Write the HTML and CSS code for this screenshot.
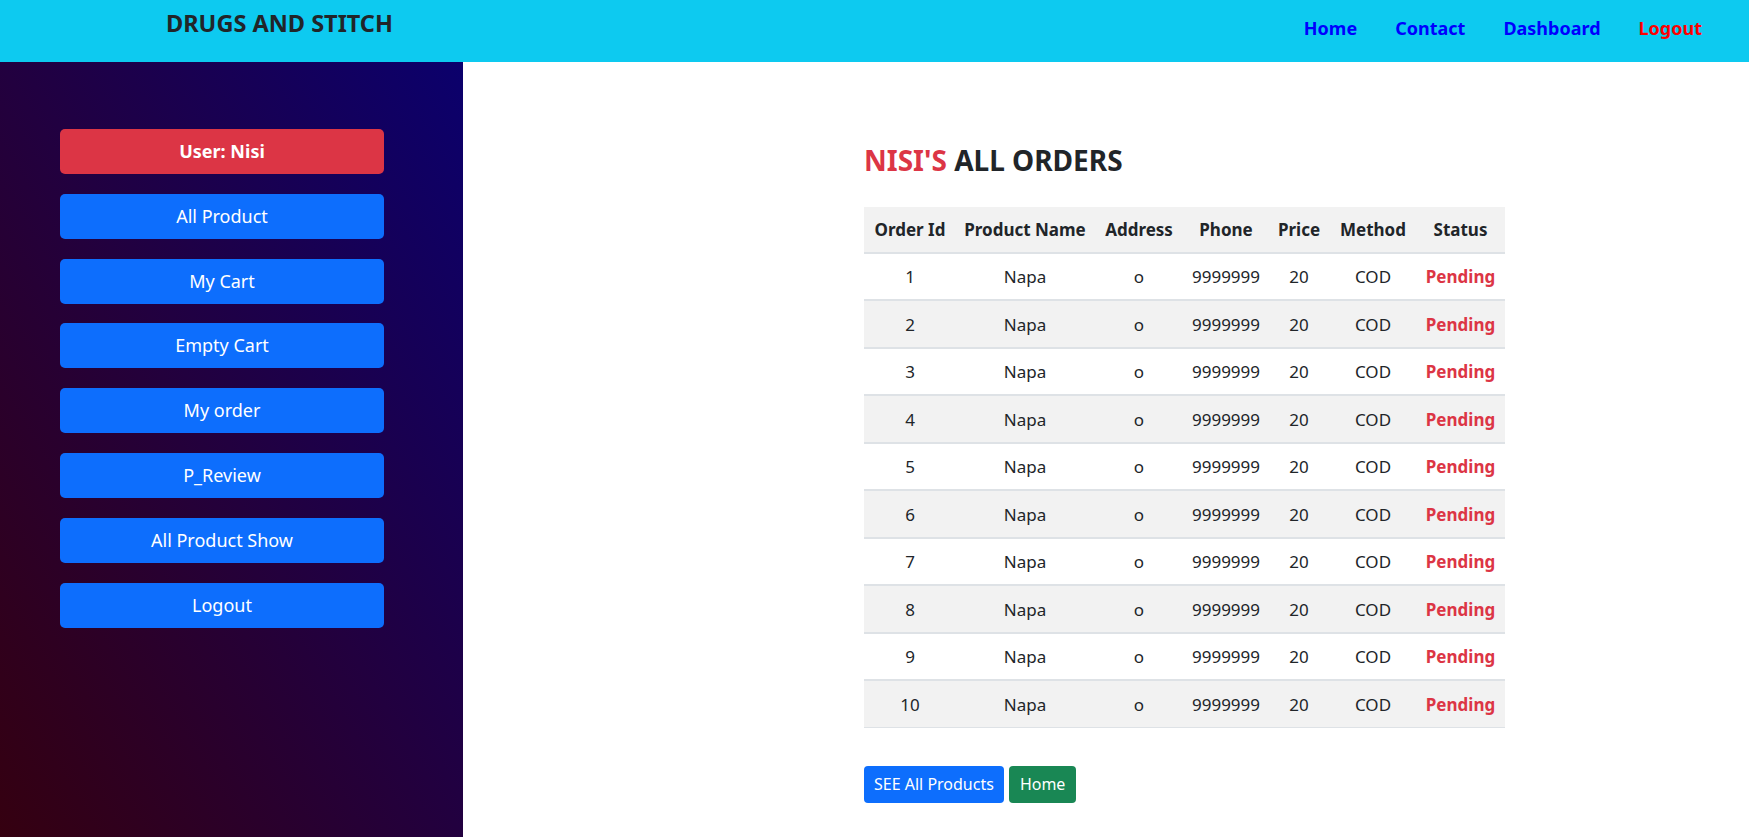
FILE: index.html
```html
<!DOCTYPE html>
<html lang="en">
<head>
<meta charset="utf-8">
<title>Drugs and Stitch - My Orders</title>
<link rel="stylesheet" href="styles.css">
</head>
<body>
<header class="topbar">
  <div class="brand">DRUGS AND STITCH</div>
  <nav class="nav">
    <a class="nav-link" href="#">Home</a>
    <a class="nav-link" href="#">Contact</a>
    <a class="nav-link" href="#">Dashboard</a>
    <a class="nav-link nav-logout" href="#">Logout</a>
  </nav>
</header>
<div class="layout">
  <aside class="sidebar">
    <a class="side-btn side-user" href="#">User: Nisi</a>
    <a class="side-btn" href="#">All Product</a>
    <a class="side-btn" href="#">My Cart</a>
    <a class="side-btn" href="#">Empty Cart</a>
    <a class="side-btn" href="#">My order</a>
    <a class="side-btn" href="#">P_Review</a>
    <a class="side-btn" href="#">All Product Show</a>
    <a class="side-btn" href="#">Logout</a>
  </aside>
  <main class="content">
    <h2 class="title"><span class="title-red">NISI'S</span> ALL ORDERS</h2>
    <table class="orders">
      <colgroup>
        <col class="c1"><col class="c2"><col class="c3"><col class="c4"><col class="c5"><col class="c6"><col class="c7">
      </colgroup>
      <thead>
        <tr><th>Order Id</th><th>Product Name</th><th>Address</th><th>Phone</th><th>Price</th><th>Method</th><th>Status</th></tr>
      </thead>
      <tbody>
        <tr><td>1</td><td>Napa</td><td>o</td><td>9999999</td><td>20</td><td>COD</td><td class="pending">Pending</td></tr>
        <tr><td>2</td><td>Napa</td><td>o</td><td>9999999</td><td>20</td><td>COD</td><td class="pending">Pending</td></tr>
        <tr><td>3</td><td>Napa</td><td>o</td><td>9999999</td><td>20</td><td>COD</td><td class="pending">Pending</td></tr>
        <tr><td>4</td><td>Napa</td><td>o</td><td>9999999</td><td>20</td><td>COD</td><td class="pending">Pending</td></tr>
        <tr><td>5</td><td>Napa</td><td>o</td><td>9999999</td><td>20</td><td>COD</td><td class="pending">Pending</td></tr>
        <tr><td>6</td><td>Napa</td><td>o</td><td>9999999</td><td>20</td><td>COD</td><td class="pending">Pending</td></tr>
        <tr><td>7</td><td>Napa</td><td>o</td><td>9999999</td><td>20</td><td>COD</td><td class="pending">Pending</td></tr>
        <tr><td>8</td><td>Napa</td><td>o</td><td>9999999</td><td>20</td><td>COD</td><td class="pending">Pending</td></tr>
        <tr><td>9</td><td>Napa</td><td>o</td><td>9999999</td><td>20</td><td>COD</td><td class="pending">Pending</td></tr>
        <tr><td>10</td><td>Napa</td><td>o</td><td>9999999</td><td>20</td><td>COD</td><td class="pending">Pending</td></tr>
      </tbody>
    </table>
    <div class="actions">
      <a class="btn btn-blue" href="#">SEE All Products</a>
      <a class="btn btn-green" href="#">Home</a>
    </div>
  </main>
</div>
</body>
</html>
```
FILE: styles.css
```css
* { box-sizing: border-box; }
html, body { margin: 0; padding: 0; }
body {
  font-family: "Noto Sans", "Open Sans", Arial, sans-serif;
  color: #212529;
  background: #fff;
  overflow: hidden;
}
a { text-decoration: none; }

.topbar {
  height: 62px;
  background: #0dcaf0;
  display: flex;
  justify-content: space-between;
  align-items: flex-start;
  padding: 0 47px 0 166px;
}
.brand {
  font-size: 23.5px;
  font-weight: 700;
  line-height: 29px;
  padding-top: 9px;
  color: #212529;
}
.nav {
  display: flex;
  gap: 38px;
  padding-top: 16px;
}
.nav-link {
  font-size: 18px;
  font-weight: 700;
  line-height: 24px;
  color: #0000ff;
}
.nav-logout { color: #ff0000; }

.layout {
  display: flex;
  min-height: calc(100vh - 62px);
}
.sidebar {
  flex: 0 0 463px;
  background: linear-gradient(to top right, #350010 0%, #22003f 50%, #0b006c 100%);
  padding: 67px 79px 0 60px;
  display: flex;
  flex-direction: column;
  gap: 19.8px;
}
.side-btn {
  display: block;
  height: 45px;
  line-height: 45px;
  text-align: center;
  background: #0d6efd;
  color: #fff;
  font-size: 18px;
  border-radius: 5px;
}
.side-user {
  background: #dc3545;
  font-weight: 700;
}

.content {
  flex: 1;
  padding-left: 401px;
}
.title {
  margin: 81px 0 30px;
  font-size: 28px;
  line-height: 34px;
  font-weight: 700;
  color: #212529;
}
.title-red { color: #dc3545; }

.orders {
  width: 641px;
  table-layout: fixed;
  border-collapse: collapse;
  font-size: 17px;
}
.c1 { width: 92px; }
.c2 { width: 138px; }
.c3 { width: 90px; }
.c4 { width: 84px; }
.c5 { width: 62px; }
.c6 { width: 86px; }
.c7 { width: 89px; }
.orders th, .orders td {
  text-align: center;
  padding: 10.5px 0 10px;
  line-height: 25px;
  border-bottom: 2px solid #dee2e6;
  white-space: nowrap;
}
.orders th {
  font-weight: 700;
  background: #f2f2f2;
  padding: 10px 0 9.5px;
}
.orders tbody tr:nth-child(even) td { background: #f2f2f2; }
.orders tbody tr:last-child td { border-bottom-width: 1px; }
.orders .pending {
  color: #dc3545;
  font-weight: 700;
}

.actions {
  display: flex;
  gap: 5px;
  margin-top: 38.5px;
}
.btn {
  display: inline-block;
  height: 37px;
  line-height: 37px;
  padding: 0 10px;
  font-size: 16px;
  color: #fff;
  border-radius: 4px;
}
.btn-blue { background: #0d6efd; }
.btn-green { background: #198754; padding: 0 11px; }
```
